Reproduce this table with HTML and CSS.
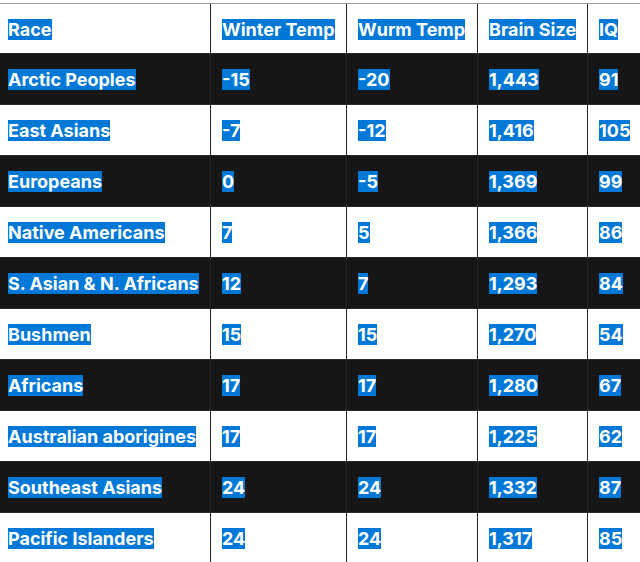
FILE: index.html
```html
<!DOCTYPE html>
<html lang="en">
<head>
<meta charset="utf-8">
<title>Race table</title>
<link rel="stylesheet" href="styles.css">
</head>
<body>
<table class="data">
  <thead>
    <tr class="row row-light">
      <th class="cell cell-race"><span class="sel">Race</span></th>
      <th class="cell cell-winter"><span class="sel">Winter Temp</span></th>
      <th class="cell cell-wurm"><span class="sel">Wurm Temp</span></th>
      <th class="cell cell-brain"><span class="sel">Brain Size</span></th>
      <th class="cell cell-iq"><span class="sel">IQ</span></th>
    </tr>
  </thead>
  <tbody>
    <tr class="row row-dark">
      <td class="cell cell-race"><span class="sel">Arctic Peoples</span></td>
      <td class="cell"><span class="sel">-15</span></td>
      <td class="cell"><span class="sel">-20</span></td>
      <td class="cell"><span class="sel">1,443</span></td>
      <td class="cell cell-iq"><span class="sel">91</span></td>
    </tr>
    <tr class="row row-light">
      <td class="cell cell-race"><span class="sel">East Asians</span></td>
      <td class="cell"><span class="sel">-7</span></td>
      <td class="cell"><span class="sel">-12</span></td>
      <td class="cell"><span class="sel">1,416</span></td>
      <td class="cell cell-iq"><span class="sel">105</span></td>
    </tr>
    <tr class="row row-dark">
      <td class="cell cell-race"><span class="sel">Europeans</span></td>
      <td class="cell"><span class="sel">0</span></td>
      <td class="cell"><span class="sel">-5</span></td>
      <td class="cell"><span class="sel">1,369</span></td>
      <td class="cell cell-iq"><span class="sel">99</span></td>
    </tr>
    <tr class="row row-light">
      <td class="cell cell-race"><span class="sel">Native Americans</span></td>
      <td class="cell"><span class="sel">7</span></td>
      <td class="cell"><span class="sel">5</span></td>
      <td class="cell"><span class="sel">1,366</span></td>
      <td class="cell cell-iq"><span class="sel">86</span></td>
    </tr>
    <tr class="row row-dark">
      <td class="cell cell-race"><span class="sel">S. Asian &amp; N. Africans</span></td>
      <td class="cell"><span class="sel">12</span></td>
      <td class="cell"><span class="sel">7</span></td>
      <td class="cell"><span class="sel">1,293</span></td>
      <td class="cell cell-iq"><span class="sel">84</span></td>
    </tr>
    <tr class="row row-light">
      <td class="cell cell-race"><span class="sel">Bushmen</span></td>
      <td class="cell"><span class="sel">15</span></td>
      <td class="cell"><span class="sel">15</span></td>
      <td class="cell"><span class="sel">1,270</span></td>
      <td class="cell cell-iq"><span class="sel">54</span></td>
    </tr>
    <tr class="row row-dark">
      <td class="cell cell-race"><span class="sel">Africans</span></td>
      <td class="cell"><span class="sel">17</span></td>
      <td class="cell"><span class="sel">17</span></td>
      <td class="cell"><span class="sel">1,280</span></td>
      <td class="cell cell-iq"><span class="sel">67</span></td>
    </tr>
    <tr class="row row-light">
      <td class="cell cell-race"><span class="sel">Australian aborigines</span></td>
      <td class="cell"><span class="sel">17</span></td>
      <td class="cell"><span class="sel">17</span></td>
      <td class="cell"><span class="sel">1,225</span></td>
      <td class="cell cell-iq"><span class="sel">62</span></td>
    </tr>
    <tr class="row row-dark">
      <td class="cell cell-race"><span class="sel">Southeast Asians</span></td>
      <td class="cell"><span class="sel">24</span></td>
      <td class="cell"><span class="sel">24</span></td>
      <td class="cell"><span class="sel">1,332</span></td>
      <td class="cell cell-iq"><span class="sel">87</span></td>
    </tr>
    <tr class="row row-light">
      <td class="cell cell-race"><span class="sel">Pacific Islanders</span></td>
      <td class="cell"><span class="sel">24</span></td>
      <td class="cell"><span class="sel">24</span></td>
      <td class="cell"><span class="sel">1,317</span></td>
      <td class="cell cell-iq"><span class="sel">85</span></td>
    </tr>
  </tbody>
</table>
</body>
</html>
```

FILE: styles.css
```css
html, body {
  margin: 0;
  padding: 0;
  background: #ffffff;
  overflow: hidden;
}

.data {
  margin-top: 3px;
  width: 640px;
  table-layout: fixed;
  border-collapse: separate;
  border-spacing: 0;
  border-top: 1px solid #9a9a9a;
  font-family: Inter, "Noto Sans", sans-serif;
  font-size: 18px;
  font-weight: 700;
  color: #ffffff;
}

.cell {
  box-sizing: border-box;
  height: 51px;
  padding: 1px 10px 0 11px;
  text-align: left;
  vertical-align: middle;
  white-space: nowrap;
  border-right: 1px solid #252525;
  border-bottom: 1px solid #2a2a2a;
  font-weight: 700;
  line-height: 21px;
}

thead .cell { height: 50px; }

.cell-race { width: 211px; padding-left: 8px; }
.cell-winter { width: 136px; }
.cell-wurm { width: 131px; }
.cell-brain { width: 110px; }
.cell-iq { width: 52px; border-right: none; }

.row-light { background: #ffffff; }
.row-dark { background: #161616; }

.sel {
  background: #0078d7;
  color: #ffffff;
}
```
